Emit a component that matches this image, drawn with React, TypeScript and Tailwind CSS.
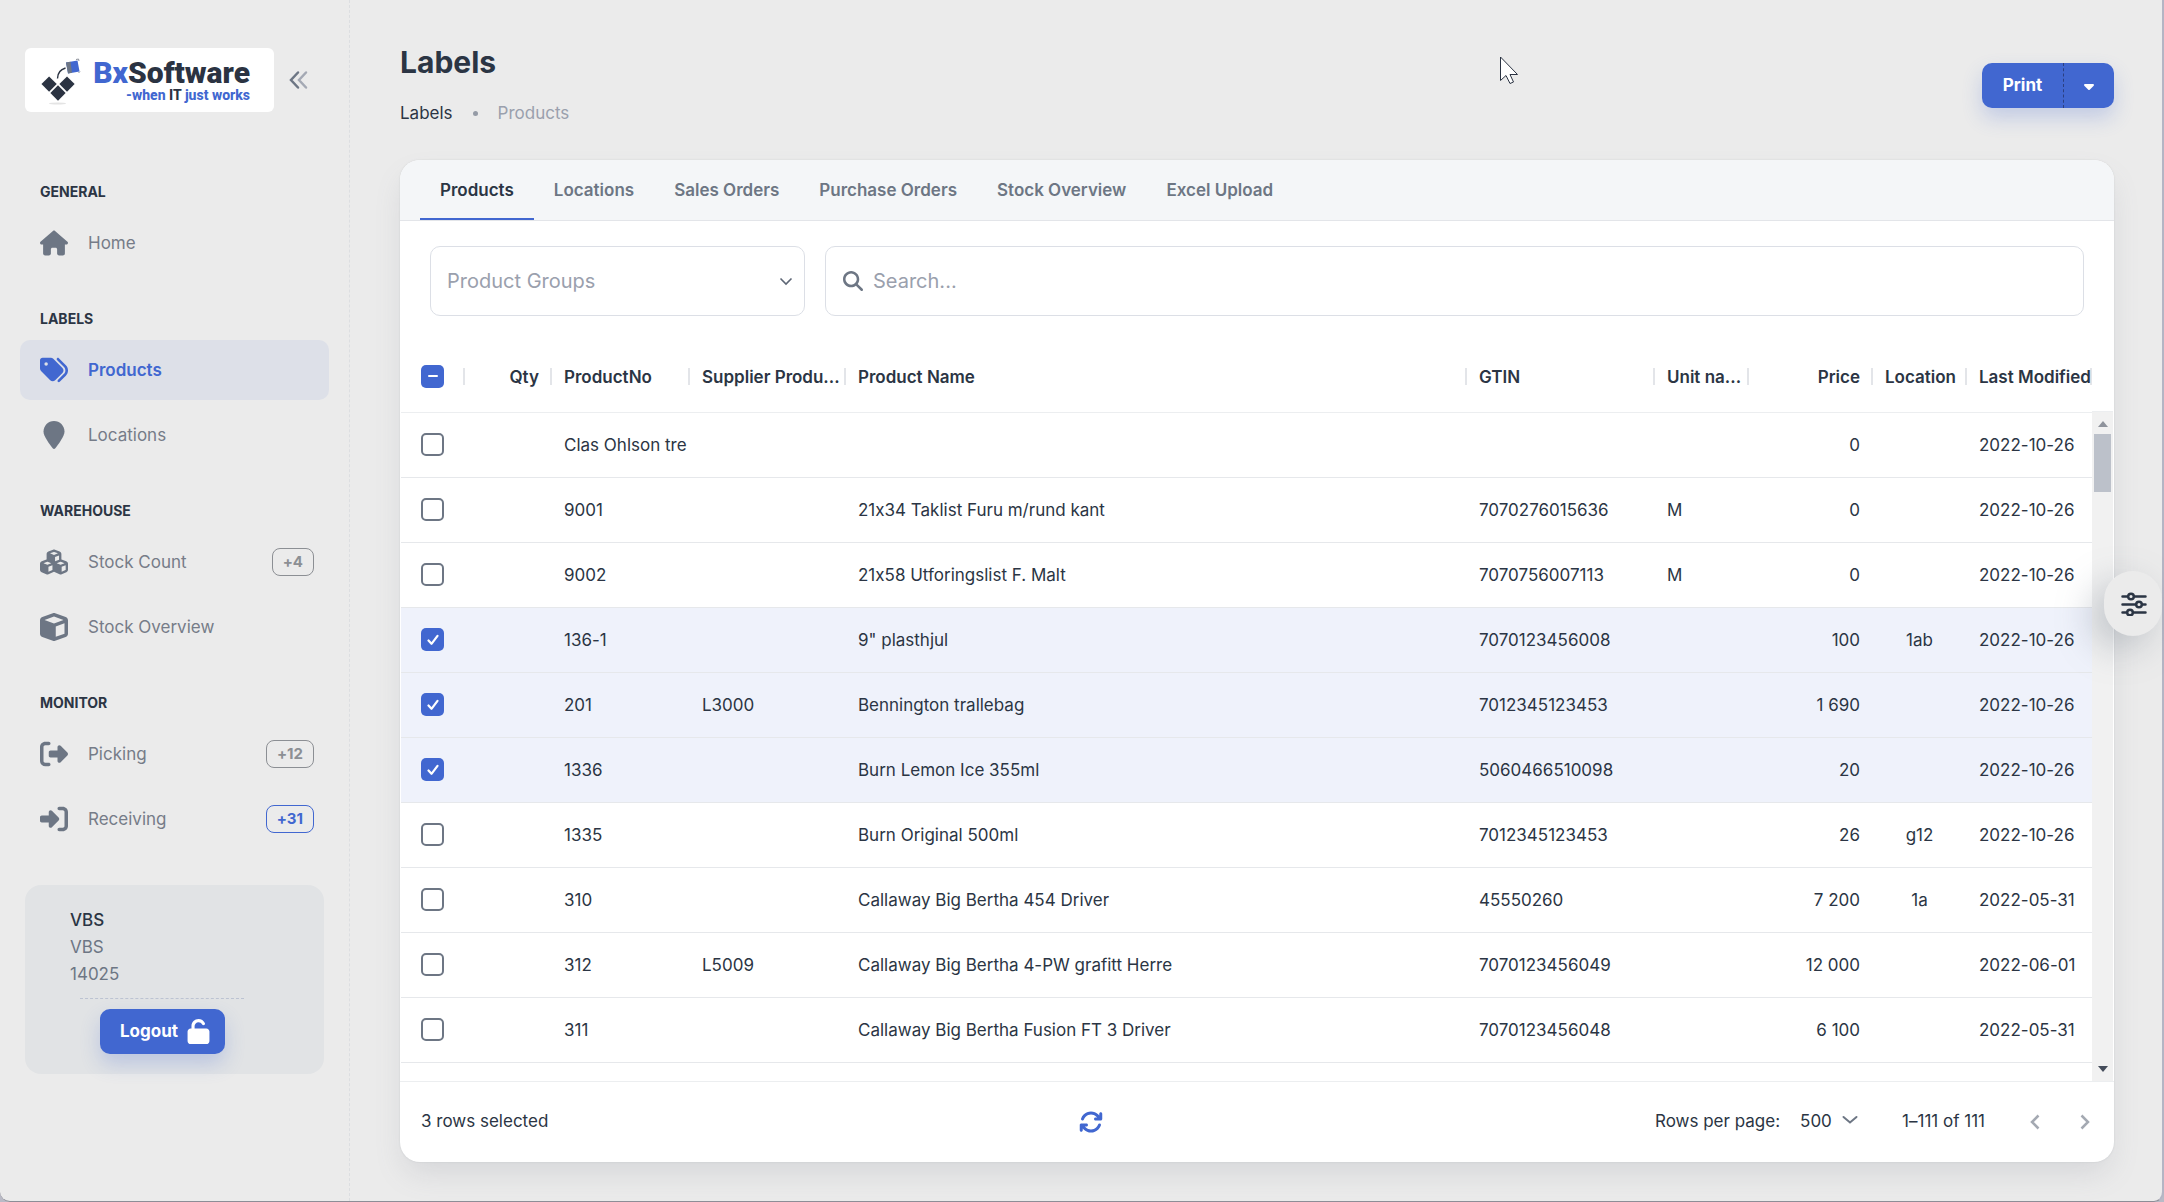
import { useState } from 'react'
import {
  FaArrowsRotate,
  FaCaretDown,
  FaCube,
  FaCubes,
  FaHouse,
  FaLocationPin,
  FaMagnifyingGlass,
  FaRightFromBracket,
  FaRightToBracket,
  FaTags,
  FaUnlock,
} from 'react-icons/fa6'
import type { IconType } from 'react-icons'
import clsx from 'clsx'

type NavItem = {
  label: string
  icon: IconType
  badge?: string
  active?: boolean
  highlight?: boolean
}

const navGroups: { title: string; items: NavItem[] }[] = [
  { title: 'GENERAL', items: [{ label: 'Home', icon: FaHouse }] },
  {
    title: 'LABELS',
    items: [
      { label: 'Products', icon: FaTags, active: true },
      { label: 'Locations', icon: FaLocationPin },
    ],
  },
  {
    title: 'WAREHOUSE',
    items: [
      { label: 'Stock Count', icon: FaCubes, badge: '+4' },
      { label: 'Stock Overview', icon: FaCube },
    ],
  },
  {
    title: 'MONITOR',
    items: [
      { label: 'Picking', icon: FaRightFromBracket, badge: '+12' },
      { label: 'Receiving', icon: FaRightToBracket, badge: '+31', highlight: true },
    ],
  },
]

const tabs = ['Products', 'Locations', 'Sales Orders', 'Purchase Orders', 'Stock Overview', 'Excel Upload']

const columns = [
  { label: 'Qty', width: 'w-[87px]', align: 'text-right' },
  { label: 'ProductNo', width: 'w-[138px]', align: 'text-left' },
  { label: 'Supplier Produ...', width: 'w-[156px]', align: 'text-left' },
  { label: 'Product Name', width: '', align: 'text-left' },
  { label: 'GTIN', width: 'w-[188px]', align: 'text-left' },
  { label: 'Unit na...', width: 'w-[94px]', align: 'text-left' },
  { label: 'Price', width: 'w-[124px]', align: 'text-right' },
  { label: 'Location', width: 'w-[94px]', align: 'text-center' },
  { label: 'Last Modified', width: 'w-[125px]', align: 'text-left' },
]

// qty, product no, supplier no, name, gtin, unit, price, location, modified
const products = [
  ['', 'Clas Ohlson tre', '', '', '', '', '0', '', '2022-10-26'],
  ['', '9001', '', '21x34 Taklist Furu m/rund kant', '7070276015636', 'M', '0', '', '2022-10-26'],
  ['', '9002', '', '21x58 Utforingslist F. Malt', '7070756007113', 'M', '0', '', '2022-10-26'],
  ['', '136-1', '', '9" plasthjul', '7070123456008', '', '100', '1ab', '2022-10-26'],
  ['', '201', 'L3000', 'Bennington trallebag', '7012345123453', '', '1 690', '', '2022-10-26'],
  ['', '1336', '', 'Burn Lemon Ice 355ml', '5060466510098', '', '20', '', '2022-10-26'],
  ['', '1335', '', 'Burn Original 500ml', '7012345123453', '', '26', 'g12', '2022-10-26'],
  ['', '310', '', 'Callaway Big Bertha 454 Driver', '45550260', '', '7 200', '1a', '2022-05-31'],
  ['', '312', 'L5009', 'Callaway Big Bertha 4-PW grafitt Herre', '7070123456049', '', '12 000', '', '2022-06-01'],
  ['', '311', '', 'Callaway Big Bertha Fusion FT 3 Driver', '7070123456048', '', '6 100', '', '2022-05-31'],
]

function Logo() {
  return (
    <div className="flex h-16 w-[249px] items-center rounded-md bg-white pl-4 pr-6">
      <svg viewBox="0 0 42 50" className="h-[50px] w-[42px] shrink-0" aria-hidden="true">
        <g fill="#2b3342">
          <rect x="2.700" y="23.700" width="10.800" height="10.800" transform="rotate(45 8.100 29.100)" />
          <rect x="20.600" y="23.700" width="10.800" height="10.800" transform="rotate(45 26 29.100)" />
          <rect x="11.600" y="32.600" width="10.800" height="10.800" transform="rotate(45 17 38)" />
        </g>
        <path d="M16.500 23.500c0-5 3-9 8-10.500" fill="none" stroke="#2b3342" strokeWidth="1.400" />
        <path d="M25 7.500 36.500 5.500 38.500 16.500 27 18.500z" fill="#4167d0" />
        <path d="M25 7.500 29.500 6.700 31 17.800 27 18.500z" fill="#6d7684" />
        <path d="M35 4.500 37.500 4l.5 2M37.500 18l1.500-1.500" fill="none" stroke="#8f939c" />
        <ellipse cx="16.500" cy="48.500" rx="8.500" ry="1" fill="#e4e4e4" />
      </svg>
      <div className="flex flex-1 flex-col items-end font-['Roboto','Liberation_Sans',sans-serif]">
        <span className="text-[30px] leading-[30px] font-black text-[#2b3342]">
          <span className="text-[#4167d0]">Bx</span>Software
        </span>
        <span className="text-[14px] leading-[14px] font-extrabold text-[#4167d0]">
          -when <span className="text-[#2b3342]">IT</span> just works
        </span>
      </div>
    </div>
  )
}

function NavLink({ item }: { item: NavItem }) {
  const Icon = item.icon
  return (
    <a
      href="#"
      className={clsx(
        'flex h-[60px] items-center rounded-[10px] pl-5 pr-[15px]',
        item.active ? 'bg-[#dde0e8] font-semibold text-[#4167d0]' : 'text-[#767c88]'
      )}
    >
      <Icon className={clsx('size-7', !item.active && 'text-[#6d7684]')} />
      <span className="ml-5 flex-1 pt-px text-[17px]">{item.label}</span>
      {item.badge && (
        <span
          className={clsx(
            'rounded-lg border px-[10px] text-[15px] leading-[26px] font-bold',
            item.highlight ? 'border-[#4167d0] text-[#4167d0]' : 'border-[#8c8f94] text-[#8c8f94]'
          )}
        >
          {item.badge}
        </span>
      )}
    </a>
  )
}

function Sidebar() {
  return (
    <aside className="flex w-[350px] shrink-0 flex-col border-r border-dashed border-[#dcdee1] px-5 pt-12">
      <div className="flex items-center gap-[14px] pl-[5px]">
        <Logo />
        <button type="button" aria-label="Collapse menu">
          <svg viewBox="0 0 20 20" className="size-5" fill="none" strokeWidth="2.500" strokeLinecap="round">
            <path d="M18 2.500 11 10l7 7.500" stroke="#a4a9b4" />
            <path d="M10 2.500 3 10l7 7.500" stroke="#6d7684" />
          </svg>
        </button>
      </div>

      <nav className="mt-[39px]">
        {navGroups.map((group) => (
          <div key={group.title} className="flex flex-col">
            <h2 className="h-[62px] pt-[30px] pl-5 text-[14px] leading-[22px] font-bold text-[#2b3544]">
              {group.title}
            </h2>
            <div className="mb-[5px] flex flex-col gap-[5px]">
              {group.items.map((item) => (
                <NavLink key={item.label} item={item} />
              ))}
            </div>
          </div>
        ))}
      </nav>

      <div className="mx-[5px] mt-[31px] rounded-2xl bg-[#e1e3e5] px-[45px] pt-[22px] pb-5 text-[17px] leading-[27px]">
        <p className="font-medium text-[#2b3544]">VBS</p>
        <p className="text-[#6d7684]">VBS</p>
        <p className="text-[#6d7684]">14025</p>
        <hr className="mt-[10px] ml-[10px] w-[164px] border-dashed border-[#bcc3d2]" />
        <button
          type="button"
          className="mt-[10px] ml-[30px] flex h-[45px] w-[125px] items-center justify-center gap-2 rounded-[10px] bg-[#4167d0] pl-[6px] text-[17px] font-bold text-white shadow-[0_10px_20px_rgba(65,103,208,0.24)]"
        >
          Logout
          <FaUnlock className="size-[25px]" />
        </button>
      </div>
    </aside>
  )
}

function Checkbox({
  label,
  checked,
  mixed,
  onChange,
}: {
  label: string
  checked: boolean
  mixed?: boolean
  onChange: () => void
}) {
  return (
    <span className="grid w-[23px] place-items-center">
      <input
        type="checkbox"
        aria-label={label}
        checked={checked}
        onChange={onChange}
        className={clsx(
          'col-start-1 row-start-1 size-[23px] appearance-none rounded-[5px]',
          checked || mixed ? 'bg-[#4167d0]' : 'border-2 border-[#6d7684] bg-white'
        )}
      />
      {mixed && <span className="col-start-1 row-start-1 h-[2px] w-[10px] rounded bg-white" />}
      {checked && !mixed && (
        <svg
          viewBox="0 0 12 12"
          className="pointer-events-none col-start-1 row-start-1 size-3"
          fill="none"
          stroke="white"
          strokeWidth="2.200"
          strokeLinecap="round"
          strokeLinejoin="round"
        >
          <path d="M1.500 6.500 4.500 9.800 10.500 1.800" />
        </svg>
      )}
    </span>
  )
}

function ProductTable({ selected, toggle }: { selected: number[]; toggle: (i: number) => void }) {
  return (
    <div className="flex px-px">
      <table className="w-full flex-1 table-fixed border-collapse text-[17px] text-[#2b3544]">
        <thead>
          <tr className="h-[71px] border-b border-[#eceef0]">
            <th className="w-16 p-0">
              <div className="flex h-[17px] items-center border-r-2 border-[#e3e5e9] pl-5">
                <Checkbox label="Select all rows" checked={false} mixed onChange={() => {}} />
              </div>
            </th>
            {columns.map((col) => (
              <th key={col.label} className={clsx('p-0 font-semibold', col.width, col.align)}>
                <div className="flex h-[17px] items-center border-r-2 border-[#e3e5e9]">
                  <span
                    className={clsx(
                      'flex-1 pt-[2px] pl-3 whitespace-nowrap',
                      col.align !== 'text-left' && 'pr-[11px]'
                    )}
                  >
                    {col.label}
                  </span>
                </div>
              </th>
            ))}
          </tr>
        </thead>
        <tbody>
          {products.map((row, i) => (
            <tr
              key={row[1]}
              className={clsx('h-[65px] border-b border-[#e6e8eb]', selected.includes(i) && 'bg-[#eff2fb]')}
            >
              <td className="p-0 pl-5">
                <Checkbox label={`Select ${row[1]}`} checked={selected.includes(i)} onChange={() => toggle(i)} />
              </td>
              {row.map((cell, c) => (
                <td key={c} className={clsx('pt-[2px] pr-[13px] pb-0 pl-3 whitespace-nowrap', columns[c].align)}>
                  {cell}
                </td>
              ))}
            </tr>
          ))}
        </tbody>
      </table>

      <div className="flex w-[21px] shrink-0 flex-col">
        <div className="h-[71px] border-b border-[#eceef0]" />
        <div className="-mb-[18px] flex flex-1 flex-col items-center bg-[#f1f1f1] pt-[9px] pb-[9px]">
          <svg viewBox="0 0 10 6" className="h-[6px] w-[10px]" fill="#8f939c">
            <path d="M5 0 10 6H0z" />
          </svg>
          <div className="mt-[7px] h-[58px] w-[17px] bg-[#bcc1ca]" />
          <svg viewBox="0 0 10 6" className="mt-auto h-[6px] w-[10px]" fill="#454d5b">
            <path d="M0 0h10L5 6z" />
          </svg>
        </div>
      </div>
    </div>
  )
}

function TableFooter({ count }: { count: number }) {
  return (
    <div className="mt-[18px] flex h-[81px] items-center border-t border-[#eceef0] pr-6 pl-[21px] text-[17px] text-[#2b3544]">
      <span className="flex-1">{count} rows selected</span>
      <button type="button" aria-label="Refresh" className="text-[#4167d0]">
        <FaArrowsRotate className="size-6" />
      </button>
      <div className="flex flex-[1.500] items-center justify-end">
        <label htmlFor="page-size">Rows per page:</label>
        <select id="page-size" defaultValue="500" className="ml-5 w-[34px] appearance-none">
          <option>500</option>
        </select>
        <svg viewBox="0 0 16 10" className="mt-[-4px] ml-2 h-[10px] w-4" fill="none" stroke="#6d7684" strokeWidth="2">
          <path d="M1.500 2 8 7.500 14.500 2" strokeLinecap="round" />
        </svg>
        <span className="ml-11">1–111 of 111</span>
        <button type="button" aria-label="Previous page" className="ml-[45px]">
          <svg viewBox="0 0 10 16" className="h-4 w-[10px]" fill="none" stroke="#a4a9b2" strokeWidth="2.500">
            <path d="M8.500 1.500 2 8l6.500 6.500" />
          </svg>
        </button>
        <button type="button" aria-label="Next page" className="ml-10">
          <svg viewBox="0 0 10 16" className="h-4 w-[10px]" fill="none" stroke="#a4a9b2" strokeWidth="2.500">
            <path d="M1.500 1.500 8 8l-6.500 6.500" />
          </svg>
        </button>
      </div>
    </div>
  )
}

export default function App() {
  const [tab, setTab] = useState('Products')
  const [selected, setSelected] = useState([3, 4, 5])

  const toggle = (i: number) =>
    setSelected((prev) => (prev.includes(i) ? prev.filter((n) => n !== i) : [...prev, i]))

  return (
    <div className="min-h-screen bg-[#b9bac6] font-['Inter','Open_Sans',sans-serif] [font-variant-ligatures:none]">
      <div className="flex min-h-screen rounded-b-[10px] border-r-2 border-b border-r-[#b4b5c4] border-b-[#8d8d96] bg-[#ebebeb]">
        <Sidebar />

        <main className="min-w-0 flex-1 pt-[42px] pr-12 pb-[39px] pl-[50px]">
          <header className="flex items-start justify-between">
            <div>
              <h1 className="text-[30px] leading-10 font-bold text-[#2b3544]">Labels</h1>
              <nav aria-label="Breadcrumb" className="mt-[18px] flex items-center text-[17px] leading-[26px]">
                <a href="#" className="text-[#2b3544]">
                  Labels
                </a>
                <span className="mx-5 size-[5px] rounded-full bg-[#959ba6]" />
                <span className="text-[#9aa0ad]">Products</span>
              </nav>
            </div>
            <div className="mt-[21px] flex h-[45px] rounded-[10px] bg-[#4167d0] text-white shadow-[0_10px_20px_rgba(65,103,208,0.24)]">
              <button type="button" className="w-[82px] border-r border-dashed border-[#2b3f80] text-[17px] font-bold">
                Print
              </button>
              <button type="button" aria-label="More print options" className="flex w-[50px] items-center justify-center">
                <FaCaretDown className="size-4" />
              </button>
            </div>
          </header>

          <section className="mt-[34px] rounded-[20px] bg-white shadow-[0_15px_30px_-5px_rgba(109,118,132,0.18),0_0_2px_rgba(109,118,132,0.2)]">
            <div role="tablist" className="flex h-[61px] rounded-t-[20px] border-b border-[#e3e5e9] bg-[#f4f6f8] px-5">
              {tabs.map((name) => (
                <button
                  key={name}
                  type="button"
                  role="tab"
                  aria-selected={tab === name}
                  onClick={() => setTab(name)}
                  className={clsx(
                    'border-b-2 px-5 pt-1 text-[17px] font-semibold whitespace-nowrap',
                    tab === name ? 'border-[#4167d0] text-[#2b3544]' : 'border-transparent text-[#6d7684]'
                  )}
                >
                  {name}
                </button>
              ))}
            </div>

            <div className="flex gap-5 px-[30px] pt-[25px] pb-[25px]">
              <div className="grid w-[375px] items-center">
                <select
                  aria-label="Product Groups"
                  className="col-start-1 row-start-1 h-[70px] appearance-none rounded-[10px] border border-[#dcdfe6] px-4 text-[20px] text-[#9aa0ad]"
                >
                  <option>Product Groups</option>
                </select>
                <svg
                  viewBox="0 0 14 9"
                  className="pointer-events-none col-start-1 row-start-1 mr-3 h-[9px] w-[14px] justify-self-end"
                  fill="none"
                  stroke="#5d6675"
                  strokeWidth="1.600"
                >
                  <path d="M1.500 1.500 7 7l5.500-5.500" />
                </svg>
              </div>
              <label className="flex h-[70px] flex-1 items-center rounded-[10px] border border-[#dcdfe6] px-[17px]">
                <FaMagnifyingGlass className="size-5 text-[#6d7684]" />
                <input
                  type="text"
                  aria-label="Search"
                  placeholder="Search..."
                  className="ml-[10px] flex-1 text-[20px] outline-none placeholder:text-[#9aa0ad]"
                />
              </label>
            </div>

            <ProductTable selected={selected} toggle={toggle} />
            <TableFooter count={selected.length} />
          </section>
        </main>
      </div>

      <button
        type="button"
        aria-label="Settings"
        className="fixed top-[571px] right-[2px] flex h-[65px] w-[58px] items-center justify-center rounded-[30px] bg-[#ebebeb] pl-[2px] shadow-[-12px_12px_36px_rgba(109,118,132,0.36)]"
      >
        <svg viewBox="0 0 26 24" className="h-6 w-[26px]" fill="none" stroke="#2b3544" strokeWidth="2.500" strokeLinecap="round">
          <path d="M1.500 4.500h23M1.500 12.500h23M1.500 20.500h23" />
          <circle cx="10" cy="4.500" r="2.800" fill="#ebebeb" />
          <circle cx="18" cy="12.500" r="2.800" fill="#ebebeb" />
          <circle cx="9" cy="20.500" r="2.800" fill="#ebebeb" />
        </svg>
      </button>

      <svg viewBox="0 0 18 28" className="pointer-events-none fixed top-14 left-[1500px] h-7 w-[18px]" aria-hidden="true">
        <path d="M.5 1v23.500l5.500-5 4 8 3.500-1.500-3.500-7.500h7.500z" fill="white" stroke="#2b3342" />
      </svg>
    </div>
  )
}
